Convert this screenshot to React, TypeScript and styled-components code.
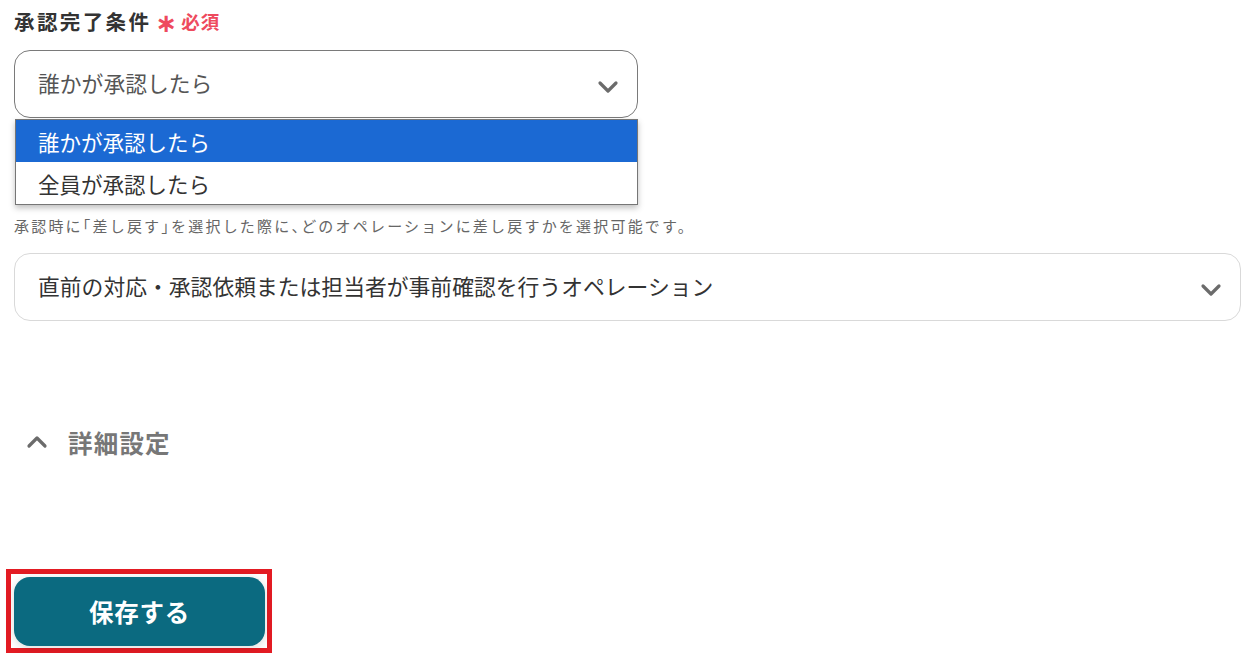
import React, { useState } from 'react';
import styled, { createGlobalStyle } from 'styled-components';

const GlobalStyle = createGlobalStyle`
  body {
    margin: 0;
    background: #ffffff;
    font-family: "Noto Sans CJK JP", "Noto Sans", sans-serif;
  }
`;

const Page = styled.div`
  padding: 0 10px 0 14px;
  display: flex;
  flex-direction: column;
`;

const FieldLabel = styled.div`
  margin-top: 6px;
  display: flex;
  align-items: center;
  gap: 4px;
  height: 30px;
  font-size: 20.5px;
  font-weight: 700;
  letter-spacing: 2.4px;
  color: #333333;
`;

const Required = styled.span`
  display: flex;
  align-items: center;
  gap: 3px;
  font-size: 18.5px;
  font-weight: 700;
  letter-spacing: 1px;
  color: #ee4a5e;
`;

const Asterisk = styled.span`
  font-family: "DejaVu Sans", sans-serif;
  font-size: 26px;
  font-weight: 700;
  line-height: 1;
  margin-top: 4px;
`;

const SelectWrap = styled.div<{ $width?: string; $top: number }>`
  position: relative;
  width: ${(p) => p.$width || '100%'};
  margin-top: ${(p) => p.$top}px;
`;

const SelectBox = styled.div<{ $open?: boolean }>`
  box-sizing: border-box;
  height: 68px;
  display: flex;
  align-items: center;
  justify-content: space-between;
  padding: 0 18px 4px 23px;
  border: 1px solid ${(p) => (p.$open ? '#7a7a7a' : '#d9d9d9')};
  border-radius: 16px;
  background: #fff;
  font-size: 21.8px;
  color: ${(p) => (p.$open ? '#555555' : '#333333')};
  cursor: pointer;

  svg {
    margin-top: 9px;
  }
`;

const Options = styled.ul`
  position: absolute;
  top: calc(100% + 1px);
  left: 1px;
  right: 0;
  margin: 0;
  padding: 0;
  list-style: none;
  background: #fff;
  border: 1px solid #767676;
  box-shadow: 0 3px 6px rgba(0, 0, 0, 0.25);
  z-index: 2;
`;

const Option = styled.li<{ $active?: boolean }>`
  height: 42px;
  display: flex;
  align-items: center;
  padding-left: 22px;
  font-size: 21.5px;
  background: ${(p) => (p.$active ? '#1b69d3' : '#fff')};
  color: ${(p) => (p.$active ? '#fff' : '#333')};
`;

const HelpText = styled.p`
  margin: 97px 0 0;
  font-size: 15px;
  line-height: 22px;
  letter-spacing: 2.2px;
  color: #666666;
`;

const Punct = styled.span`
  font-feature-settings: "halt";
`;

const DetailToggle = styled.div`
  margin-top: 103px;
  height: 36px;
  display: flex;
  align-items: center;
  gap: 20px;
  padding-left: 12px;
  font-size: 24.5px;
  font-weight: 700;
  letter-spacing: 1.2px;
  color: #777777;
  cursor: pointer;
`;

const SaveFrame = styled.div`
  margin-top: 109px;
  margin-left: -8px;
  align-self: flex-start;
  border: 5px solid #e31b23;
  padding: 3px 2px 2px 3px;
`;

const SaveButton = styled.button`
  width: 251px;
  height: 69px;
  border: none;
  border-radius: 16px;
  background: #0b6a80;
  color: #fff;
  font-family: "Noto Sans CJK JP", "Noto Sans", sans-serif;
  font-size: 24.5px;
  font-weight: 700;
  letter-spacing: 0.8px;
  box-shadow: 0 2px 10px rgba(0, 0, 0, 0.15);
  cursor: pointer;
`;

const Chevron = ({ up = false }: { up?: boolean }) => (
  <svg width="22" height="14" viewBox="0 0 22 14" fill="none">
    <path
      d={up ? 'M3 11 L11 3 L19 11' : 'M3 3 L11 11 L19 3'}
      stroke="#6b6b6b"
      strokeWidth="3.2"
      strokeLinecap="round"
      strokeLinejoin="round"
    />
  </svg>
);

const conditions = ['誰かが承認したら', '全員が承認したら'];

export default function App() {
  const [condition] = useState(conditions[0]);

  return (
    <>
      <GlobalStyle />
      <Page>
        <FieldLabel>
          承認完了条件
          <Required>
            <Asterisk>∗</Asterisk>必須
          </Required>
        </FieldLabel>

        <SelectWrap $width="624px" $top={14}>
          <SelectBox $open>
            {condition}
            <Chevron />
          </SelectBox>
          <Options>
            {conditions.map((c) => (
              <Option key={c} $active={c === condition}>
                {c}
              </Option>
            ))}
          </Options>
        </SelectWrap>

        <HelpText>
          承認時に<Punct>「</Punct>差し戻す<Punct>」</Punct>を選択した際に<Punct>、</Punct>
          どのオペレーションに差し戻すかを選択可能です。
        </HelpText>

        <SelectWrap $top={16}>
          <SelectBox>
            直前の対応・承認依頼または担当者が事前確認を行うオペレーション
            <Chevron />
          </SelectBox>
        </SelectWrap>

        <DetailToggle>
          <Chevron up />
          詳細設定
        </DetailToggle>

        <SaveFrame>
          <SaveButton>保存する</SaveButton>
        </SaveFrame>
      </Page>
    </>
  );
}
